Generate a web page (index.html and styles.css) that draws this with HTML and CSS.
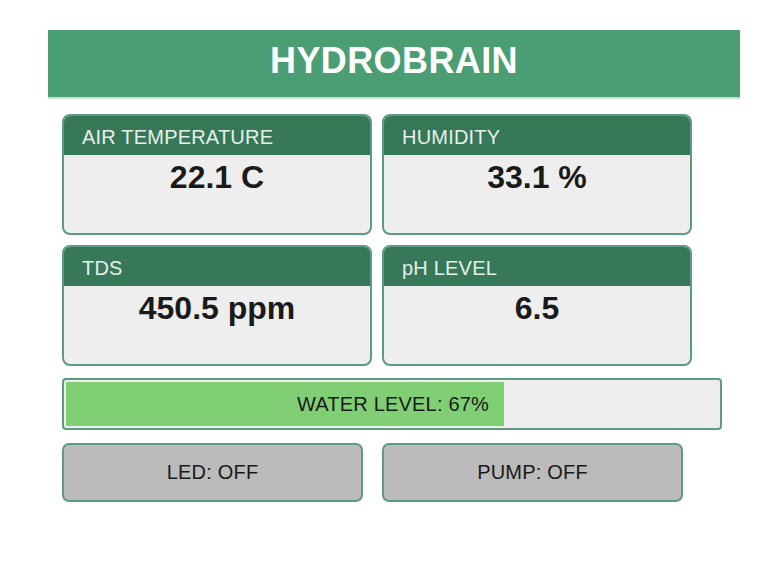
FILE: index.html
```html
<!DOCTYPE html>
<html lang="en">
<head>
  <meta charset="UTF-8" />
  <meta name="viewport" content="width=device-width, initial-scale=1.0"/>
  <title>HydroBrain</title>
  <link rel="stylesheet" href="styles.css">
</head>
<body>
  <div class="app">
    <header class="title-bar">
      <h1>HYDROBRAIN</h1>
    </header>

    <main class="panel">
      <div class="sensor-grid">
        <div class="card">
          <div class="card-head">AIR TEMPERATURE</div>
          <div class="card-value">22.1 C</div>
        </div>
        <div class="card">
          <div class="card-head">HUMIDITY</div>
          <div class="card-value">33.1 %</div>
        </div>
        <div class="card">
          <div class="card-head">TDS</div>
          <div class="card-value">450.5 ppm</div>
        </div>
        <div class="card">
          <div class="card-head">pH LEVEL</div>
          <div class="card-value">6.5</div>
        </div>
      </div>

      <div class="water-bar">
        <div class="water-fill" style="width: 67%"></div>
        <span class="water-text">WATER LEVEL: 67%</span>
      </div>

      <div class="controls">
        <button class="toggle">LED: OFF</button>
        <button class="toggle">PUMP: OFF</button>
      </div>
    </main>
  </div>
</body>
</html>
```

FILE: styles.css
```css
body {
  margin: 0;
  background: #fff;
  font-family: "Liberation Sans", Arial, sans-serif;
  color: #1a1a1a;
}

.app {
  width: 692px;
  margin: 30px 0 0 48px;
}

.title-bar {
  box-sizing: border-box;
  height: 69px;
  padding-bottom: 6px;
  background: #4b9d73;
  border-bottom: 2px solid #c4e2cf;
  display: flex;
  align-items: center;
  justify-content: center;
}

.title-bar h1 {
  margin: 0;
  color: #fff;
  font-size: 36px;
  font-weight: bold;
  letter-spacing: 0.4px;
}

.panel {
  padding: 15px 0 0 14px;
}

.sensor-grid {
  display: grid;
  grid-template-columns: 310px 310px;
  grid-auto-rows: 121px;
  gap: 10px;
}

.card {
  box-sizing: border-box;
  border: 2px solid #5c9c80;
  border-radius: 8px;
  background: #eeeeee;
  overflow: hidden;
}

.card-head {
  box-sizing: border-box;
  height: 39px;
  padding: 3px 0 0 18px;
  display: flex;
  align-items: center;
  background: #367858;
  color: #e6efe9;
  font-size: 20px;
  letter-spacing: 0.2px;
}

.card-value {
  text-align: center;
  font-size: 32px;
  font-weight: bold;
  padding-top: 4px;
}

.water-bar {
  box-sizing: border-box;
  width: 660px;
  height: 52px;
  margin-top: 12px;
  padding: 2px 0 2px 2px;
  border: 2px solid #5c9c80;
  border-radius: 4px;
  background: #eeeeee;
  display: grid;
}

/* fill and label share one cell so the label sits over the bar */
.water-fill,
.water-text {
  grid-area: 1 / 1;
}

.water-fill {
  background: #80cf74;
}

.water-text {
  align-self: center;
  justify-self: center;
  font-size: 20px;
  letter-spacing: 0.2px;
}

.controls {
  display: flex;
  gap: 19px;
  margin-top: 13px;
}

.toggle {
  box-sizing: border-box;
  width: 301px;
  height: 59px;
  border: 2px solid #5c9c80;
  border-radius: 7px;
  background: #bbbbbb;
  font-family: "Liberation Sans", Arial, sans-serif;
  font-size: 20px;
  letter-spacing: 0.2px;
  color: #1a1a1a;
  cursor: pointer;
}
```
